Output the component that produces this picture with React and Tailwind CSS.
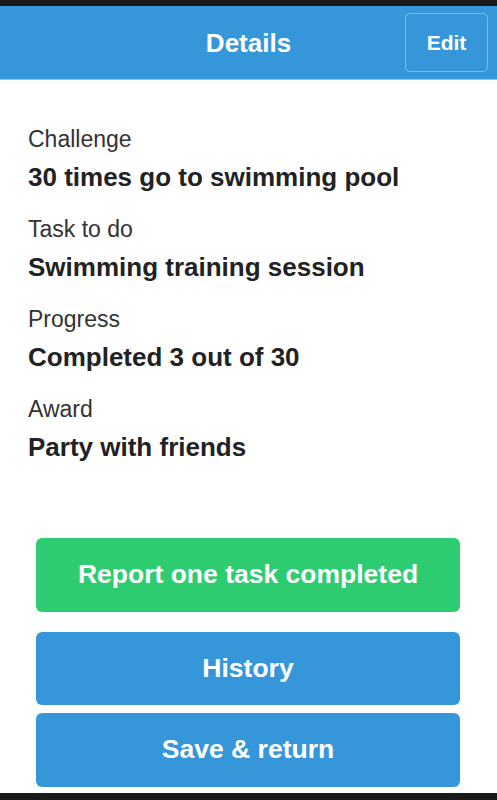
export default function App() {
  const rows = [
    ["Challenge", "30 times go to swimming pool"],
    ["Task to do", "Swimming training session"],
    ["Progress", "Completed 3 out of 30"],
    ["Award", "Party with friends"],
  ];
  return (
    <div className="h-[800px] w-[497px] flex flex-col bg-white overflow-hidden font-['Liberation_Sans',Arial,sans-serif]">
      <div className="h-[6px] bg-[#1b1b1b] shrink-0" />
      <div className="h-[74px] shrink-0 bg-[#3597da] border-b border-[#8cc6ef] grid grid-cols-[1fr_auto_1fr] items-center">
        <div />
        <div className="text-white font-bold text-[26px] leading-none">Details</div>
        <div className="flex justify-end pr-[9px]">
          <button className="w-[83px] h-[59px] rounded-[5px] border border-[#7cbdec] text-white font-bold text-[21px] bg-[#3597da]">Edit</button>
        </div>
      </div>
      <div className="flex-1 flex flex-col pt-[40px] px-[28px]">
        {rows.map(([label, value]) => (
          <div key={label} className="mb-[14px]">
            <div className="text-[23px] leading-[38px] text-[#333]">{label}</div>
            <div className="text-[26px] leading-[38px] font-bold text-[#222]">{value}</div>
          </div>
        ))}
      </div>
      <div className="flex flex-col px-[36px] pr-[37px]">
        <button className="h-[74px] rounded-[6px] bg-[#2ecc71] text-white font-bold text-[26.5px]">Report one task completed</button>
        <button className="mt-[20px] h-[73px] rounded-[6px] bg-[#3597da] text-white font-bold text-[26.5px]">History</button>
        <button className="mt-[8px] h-[74px] rounded-[6px] bg-[#3597da] text-white font-bold text-[26.5px]">Save &amp; return</button>
      </div>
      <div className="h-[6px] bg-white shrink-0" />
      <div className="h-[7px] bg-[#1b1b1b] shrink-0" />
    </div>
  );
}
